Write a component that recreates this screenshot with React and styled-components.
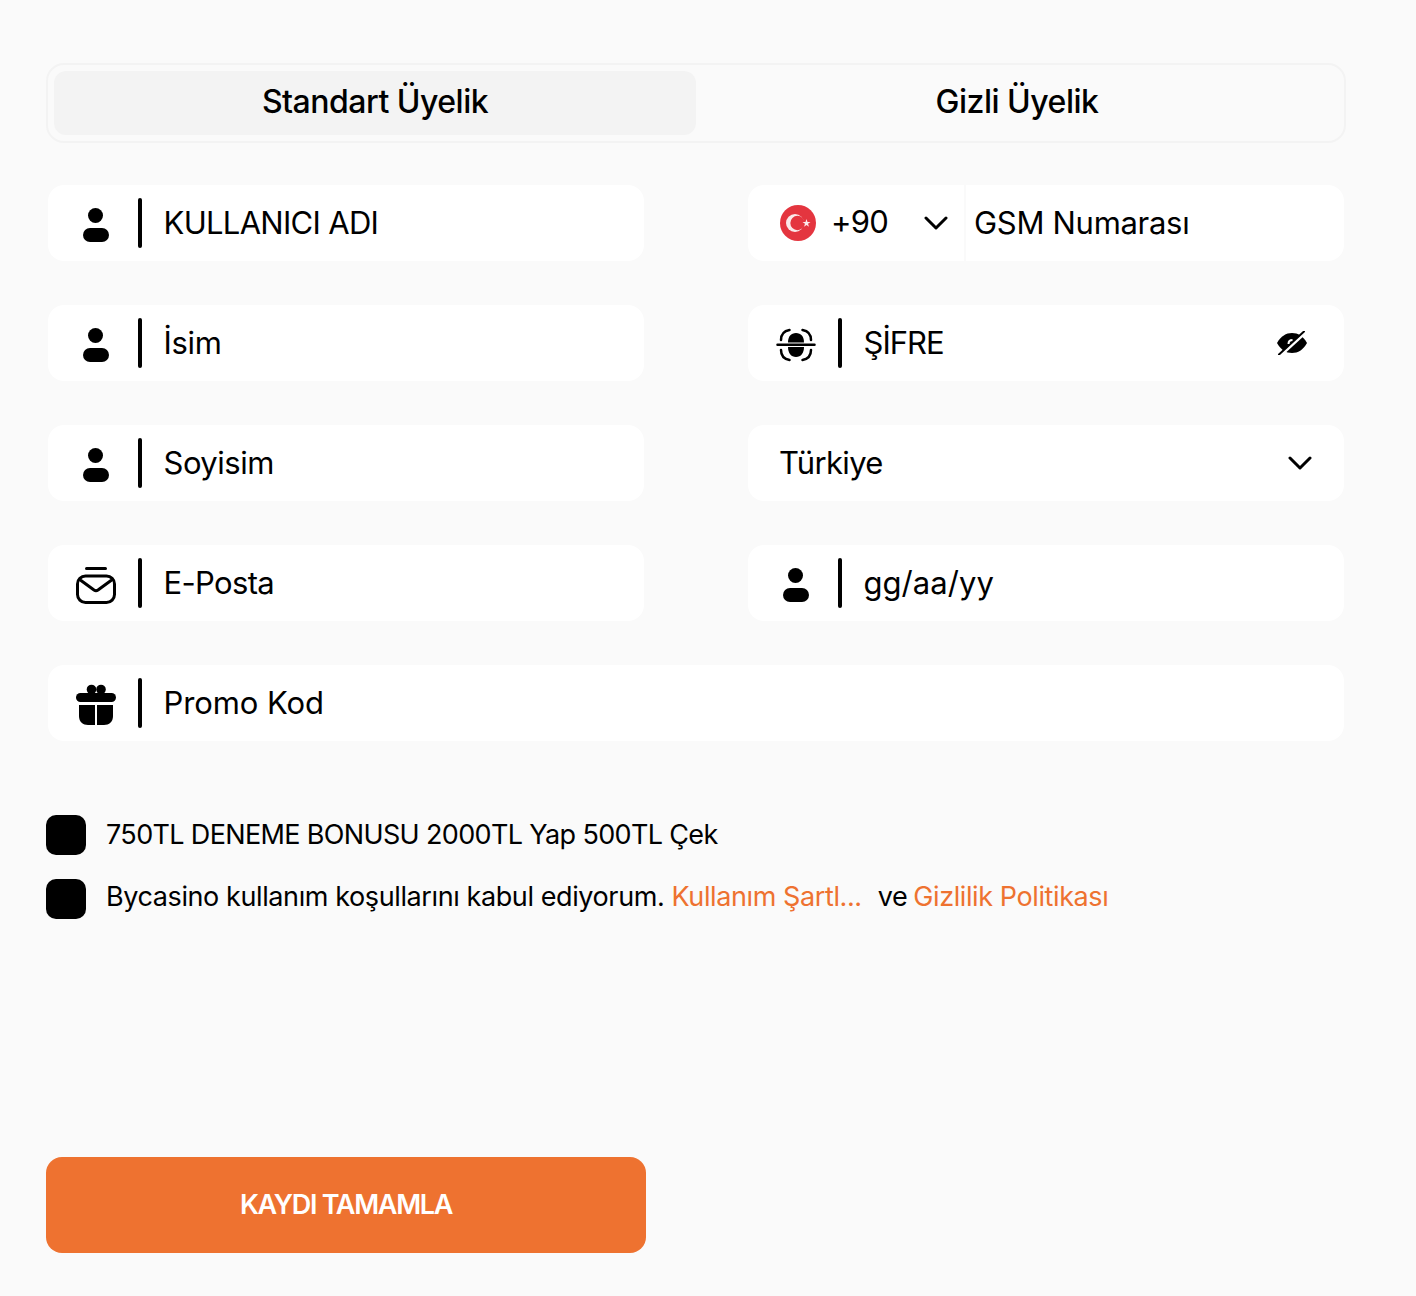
import React from 'react'
import styled, { createGlobalStyle } from 'styled-components'

const GlobalStyle = createGlobalStyle`
  html, body { margin: 0; padding: 0; background: #fafafa; }
  body { font-family: "Inter", "Noto Sans", sans-serif; color: #000; }
`

const Page = styled.div`
  width: 1416px;
  height: 1296px;
  box-sizing: border-box;
  padding: 63px 70px 0 46px;
  display: flex;
  flex-direction: column;
`

const Tabs = styled.div`
  height: 80px;
  box-sizing: border-box;
  border: 2px solid #f3f3f3;
  border-radius: 18px;
  padding: 6px;
  display: grid;
  grid-template-columns: 642px 1fr;
`

const Tab = styled.div`
  display: flex;
  align-items: center;
  justify-content: center;
  padding-bottom: 4px;
  border-radius: 12px;
  font-size: 32px;
  font-weight: 500;
  letter-spacing: -0.5px;
  background: ${({ $active }) => ($active ? '#f3f3f3' : 'transparent')};
`

const Form = styled.div`
  margin: 42px 2px 0;
  display: grid;
  grid-template-columns: 596px 596px;
  column-gap: 104px;
  row-gap: 44px;
`

const Field = styled.div`
  height: 76px;
  background: #fff;
  border-radius: 16px;
  display: flex;
  align-items: center;
  grid-column: ${({ $wide }) => ($wide ? '1 / -1' : 'auto')};
  padding: ${({ $plain }) => ($plain ? '0 32px' : '0')};
  justify-content: ${({ $plain }) => ($plain ? 'space-between' : 'flex-start')};
`

const IconSlot = styled.div`
  width: 94px;
  height: 50px;
  margin-top: 2px;
  flex: none;
  display: flex;
  align-items: center;
  justify-content: center;
  position: relative;
  svg { display: block; margin-left: 2px; }
  &::after {
    content: '';
    position: absolute;
    right: 0;
    top: -1px;
    width: 4px;
    height: 50px;
    border-radius: 2px;
    background: #000;
  }
`

const Label = styled.span`
  font-size: 31px;
  letter-spacing: ${({ $track }) => $track ?? -0.8}px;
  line-height: 76px;
  white-space: nowrap;
  margin-left: ${({ $flush }) => ($flush ? '-1px' : '21.5px')};
`

const EyeButton = styled.span`
  margin-left: auto;
  margin-right: 36px;
  display: flex;
`

const PhoneCode = styled.div`
  width: 218px;
  height: 100%;
  flex: none;
  box-sizing: border-box;
  padding: 0 16px 0 32px;
  display: flex;
  align-items: center;
  border-right: 2px solid #fafafa;
`

const Code = styled.span`
  font-size: 31px;
  letter-spacing: -0.8px;
  margin: 0 0 3px 15px;
`

const Caret = styled.svg`
  margin-left: auto;
  display: block;
`

const Flag = styled.svg`
  flex: none;
  display: block;
`

const PhoneLabel = styled(Label)`
  margin-left: 8px;
`

const Checks = styled.div`
  margin-top: 74px;
  display: flex;
  flex-direction: column;
  gap: 24px;
`

const CheckRow = styled.div`
  display: flex;
  align-items: center;
  gap: 20px;
  height: 40px;
  font-size: 27px;
  letter-spacing: ${({ $track }) => $track}px;
  white-space: nowrap;
`

const CheckText = styled.span`
  margin-bottom: ${({ $lift }) => $lift}px;
`

const Box = styled.span`
  width: 40px;
  height: 40px;
  flex: none;
  border-radius: 10px;
  background: #000;
`

const Link = styled.a`
  color: #ee7230;
`

const Spaced = styled.span`
  margin: 0 6px 0 16px;
`

const Submit = styled.button`
  margin-top: 238px;
  width: 600px;
  height: 96px;
  padding: 0 0 2px;
  border: 0;
  border-radius: 16px;
  background: #ee7230;
  color: #fff;
  font-family: inherit;
  font-size: 27px;
  font-weight: 600;
  letter-spacing: -1.3px;
`

const UserIcon = () => (
  <svg width="40" height="44" viewBox="0 0 40 44">
    <circle cx="19.500" cy="13.500" r="7.500" />
    <rect x="7" y="26" width="26" height="14" rx="7" />
  </svg>
)

const MailIcon = () => (
  <svg width="40" height="40" viewBox="0 0 40 40" fill="none" stroke="#000" strokeWidth="3" strokeLinecap="round" strokeLinejoin="round">
    <path d="M10.500 4.500h19" />
    <rect x="1.500" y="12" width="37" height="26.500" rx="8" />
    <path d="M5 16.500l13 9.500c1.300.9 2.700.9 4 0l13-9.500" />
  </svg>
)

const GiftIcon = () => (
  <svg width="40" height="44" viewBox="0 0 40 44">
    <circle cx="15.500" cy="7.500" r="4.800" />
    <circle cx="25" cy="7.500" r="4.800" />
    <rect x="0" y="11" width="40" height="9" rx="4.500" />
    <path d="M3 23h16v20h-7c-5 0-9-3-9-9z" />
    <path d="M21 23h16v11c0 6-4 9-9 9h-7z" />
  </svg>
)

const FaceIcon = () => (
  <svg width="40" height="40" viewBox="0 0 40 40" fill="none" stroke="#000" strokeWidth="2.500" strokeLinecap="round">
    <path d="M1.500 20.700h37" />
    <path d="M5 16c0-5 3-9 8.500-10M35 16c0-5-3-9-8.500-10M5 26c0 5 3 9 8.500 10M35 26c0 5-3 9-8.500 10" />
    <path d="M12 18.500c0-6 3-9.500 8-9.500s8 3.500 8 9.500z" fill="#000" stroke="none" />
    <path d="M12 23h16c0 6-3 10-8 10s-8-4-8-10z" fill="#000" stroke="none" />
  </svg>
)

const EyeOff = () => (
  <svg width="32" height="24" viewBox="0 0 32 24">
    <path d="M1 12C5 5 10 2 16 2s11 3 15 10c-4 7-9 10-15 10S5 19 1 12z" />
    <path d="M5 24L28 3" stroke="#fff" strokeWidth="3" />
    <path d="M3 23.500L28 .5" stroke="#000" strokeWidth="2" strokeLinecap="round" />
    <path d="M12.500 13c0-2.500 1.500-4 4-4" stroke="#fff" strokeWidth="2" fill="none" />
  </svg>
)

const Chevron = (props) => (
  <Caret width="24" height="14" viewBox="0 0 24 14" fill="none" stroke="#000" strokeWidth="3" strokeLinecap="round" strokeLinejoin="round" {...props}>
    <path d="M2 2l10 10L22 2" />
  </Caret>
)

const TurkishFlag = () => (
  <Flag width="36" height="36" viewBox="0 0 36 36">
    <circle cx="18" cy="18" r="18" fill="#e4353f" />
    <circle cx="15" cy="18" r="9" fill="#fbe9ea" />
    <circle cx="17.500" cy="18" r="7.200" fill="#e4353f" />
    <polygon points="26.500,14 27.500,17 30.500,17 28,18.800 29,21.800 26.500,20 24,21.800 25,18.800 22.500,17 25.500,17" fill="#fbe9ea" />
  </Flag>
)

const IconField = ({ icon, label, wide, track }) => (
  <Field $wide={wide}>
    <IconSlot>{icon}</IconSlot>
    <Label $track={track}>{label}</Label>
  </Field>
)

export default function App() {
  return (
    <>
      <GlobalStyle />
      <Page>
        <Tabs>
          <Tab $active>Standart Üyelik</Tab>
          <Tab>Gizli Üyelik</Tab>
        </Tabs>

        <Form>
          <IconField icon={<UserIcon />} label="KULLANICI ADI" track={-0.7} />
          <Field>
            <PhoneCode>
              <TurkishFlag />
              <Code>+90</Code>
              <Chevron />
            </PhoneCode>
            <PhoneLabel $track={-0.3}>GSM Numarası</PhoneLabel>
          </Field>
          <IconField icon={<UserIcon />} label="İsim" track={-0.3} />
          <Field>
            <IconSlot><FaceIcon /></IconSlot>
            <Label $track={-1}>ŞİFRE</Label>
            <EyeButton><EyeOff /></EyeButton>
          </Field>
          <IconField icon={<UserIcon />} label="Soyisim" track={-0.5} />
          <Field $plain>
            <Label $flush $track={-0.65}>Türkiye</Label>
            <Chevron />
          </Field>
          <IconField icon={<MailIcon />} label="E-Posta" track={-0.65} />
          <IconField icon={<UserIcon />} label="gg/aa/yy" track={0.05} />
          <IconField icon={<GiftIcon />} label="Promo Kod" track={-0.1} wide />
        </Form>

        <Checks>
          <CheckRow $track={-0.65}>
            <Box />
            <CheckText $lift={2}>750TL DENEME BONUSU 2000TL Yap 500TL Çek</CheckText>
          </CheckRow>
          <CheckRow $track={-0.4}>
            <Box />
            <CheckText $lift={5}>
              Bycasino kullanım koşullarını kabul ediyorum. <Link>Kullanım Şartl...</Link>
              <Spaced>ve</Spaced>
              <Link>Gizlilik Politikası</Link>
            </CheckText>
          </CheckRow>
        </Checks>

        <Submit>KAYDI TAMAMLA</Submit>
      </Page>
    </>
  )
}
